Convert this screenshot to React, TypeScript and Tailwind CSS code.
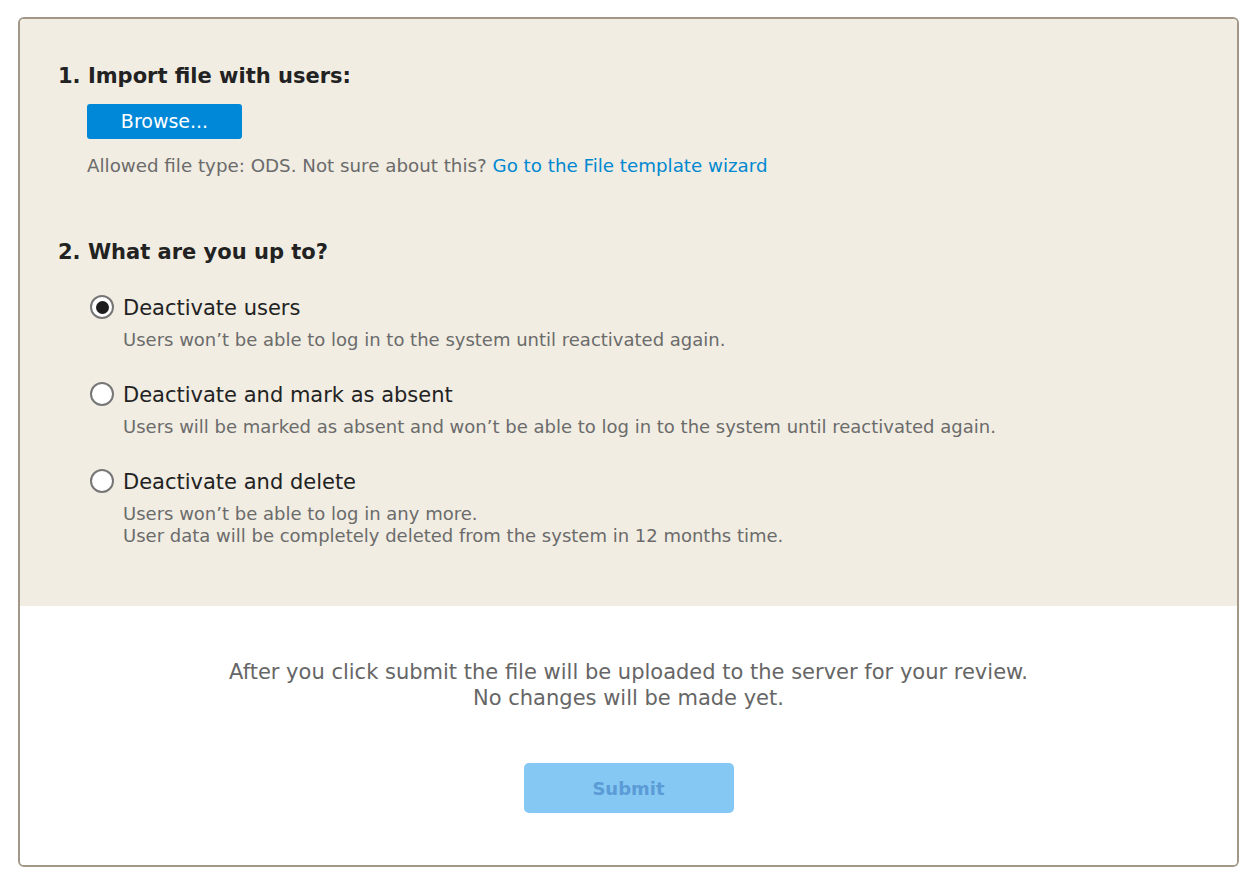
import { useState } from 'react';

const options = [
  {
    id: 'deactivate',
    label: 'Deactivate users',
    desc: ['Users won’t be able to log in to the system until reactivated again.'],
  },
  {
    id: 'absent',
    label: 'Deactivate and mark as absent',
    desc: ['Users will be marked as absent and won’t be able to log in to the system until reactivated again.'],
  },
  {
    id: 'delete',
    label: 'Deactivate and delete',
    desc: ['Users won’t be able to log in any more.', 'User data will be completely deleted from the system in 12 months time.'],
  },
];

function Radio({ checked }: { checked: boolean }) {
  return (
    <span className="w-[24px] h-[24px] rounded-full border-2 border-[#767676] bg-white flex items-center justify-center shrink-0">
      {checked && <span className="w-[13px] h-[13px] rounded-full bg-[#1c1c1c]" />}
    </span>
  );
}

export default function App() {
  const [choice, setChoice] = useState('deactivate');

  return (
    <div className="min-h-screen bg-white px-[18px] pt-[17px] pb-[20px] font-[family-name:'DejaVu_Sans',Verdana,sans-serif]">
      <div className="border-2 border-[#a39788] rounded-[6px] overflow-hidden">
        {/* Form section */}
        <div className="bg-[#f1ede2] pt-[44px] pb-[59px] pl-[38px] pr-[38px]">
          <h2 className="text-[21px] leading-[26px] font-bold text-[#222]">1. Import file with users:</h2>
          <div className="pl-[29px]">
            <button className="mt-[15px] w-[155px] h-[35px] bg-[#0088d8] text-white text-[19px] rounded-[3px]">
              Browse...
            </button>
            <p className="mt-[15px] text-[18.25px] leading-[24px] text-[#6b6b6b]">
              Allowed file type: ODS. Not sure about this?{' '}
              <a href="#" className="text-[#0088d1]">Go to the File template wizard</a>
            </p>
          </div>

          <h2 className="mt-[61px] text-[21px] leading-[26px] font-bold text-[#222]">2. What are you up to?</h2>
          <div className="pl-[32px] mt-[28px] flex flex-col gap-[29px]">
            {options.map((o) => (
              <div key={o.id}>
                <label className="flex items-center gap-[9px] cursor-pointer" onClick={() => setChoice(o.id)}>
                  <Radio checked={choice === o.id} />
                  <span className="text-[21px] leading-[28px] text-[#222] translate-y-[1px]">{o.label}</span>
                </label>
                <div className="mt-[8px] pl-[33px] text-[18px] leading-[22px] text-[#6b6b6b]">
                  {o.desc.map((d) => (
                    <p key={d}>{d}</p>
                  ))}
                </div>
              </div>
            ))}
          </div>
        </div>

        {/* Submit section */}
        <div className="bg-white pt-[53px] pb-[52px] flex flex-col items-center">
          <p className="text-center text-[21px] leading-[26px] text-[#666]">
            After you click submit the file will be uploaded to the server for your review.
            <br />
            No changes will be made yet.
          </p>
          <button disabled className="mt-[52px] w-[210px] h-[50px] rounded-[5px] bg-[#85c8f3] text-[#5b9bd6] text-[18px] font-bold">
            Submit
          </button>
        </div>
      </div>
    </div>
  );
}
